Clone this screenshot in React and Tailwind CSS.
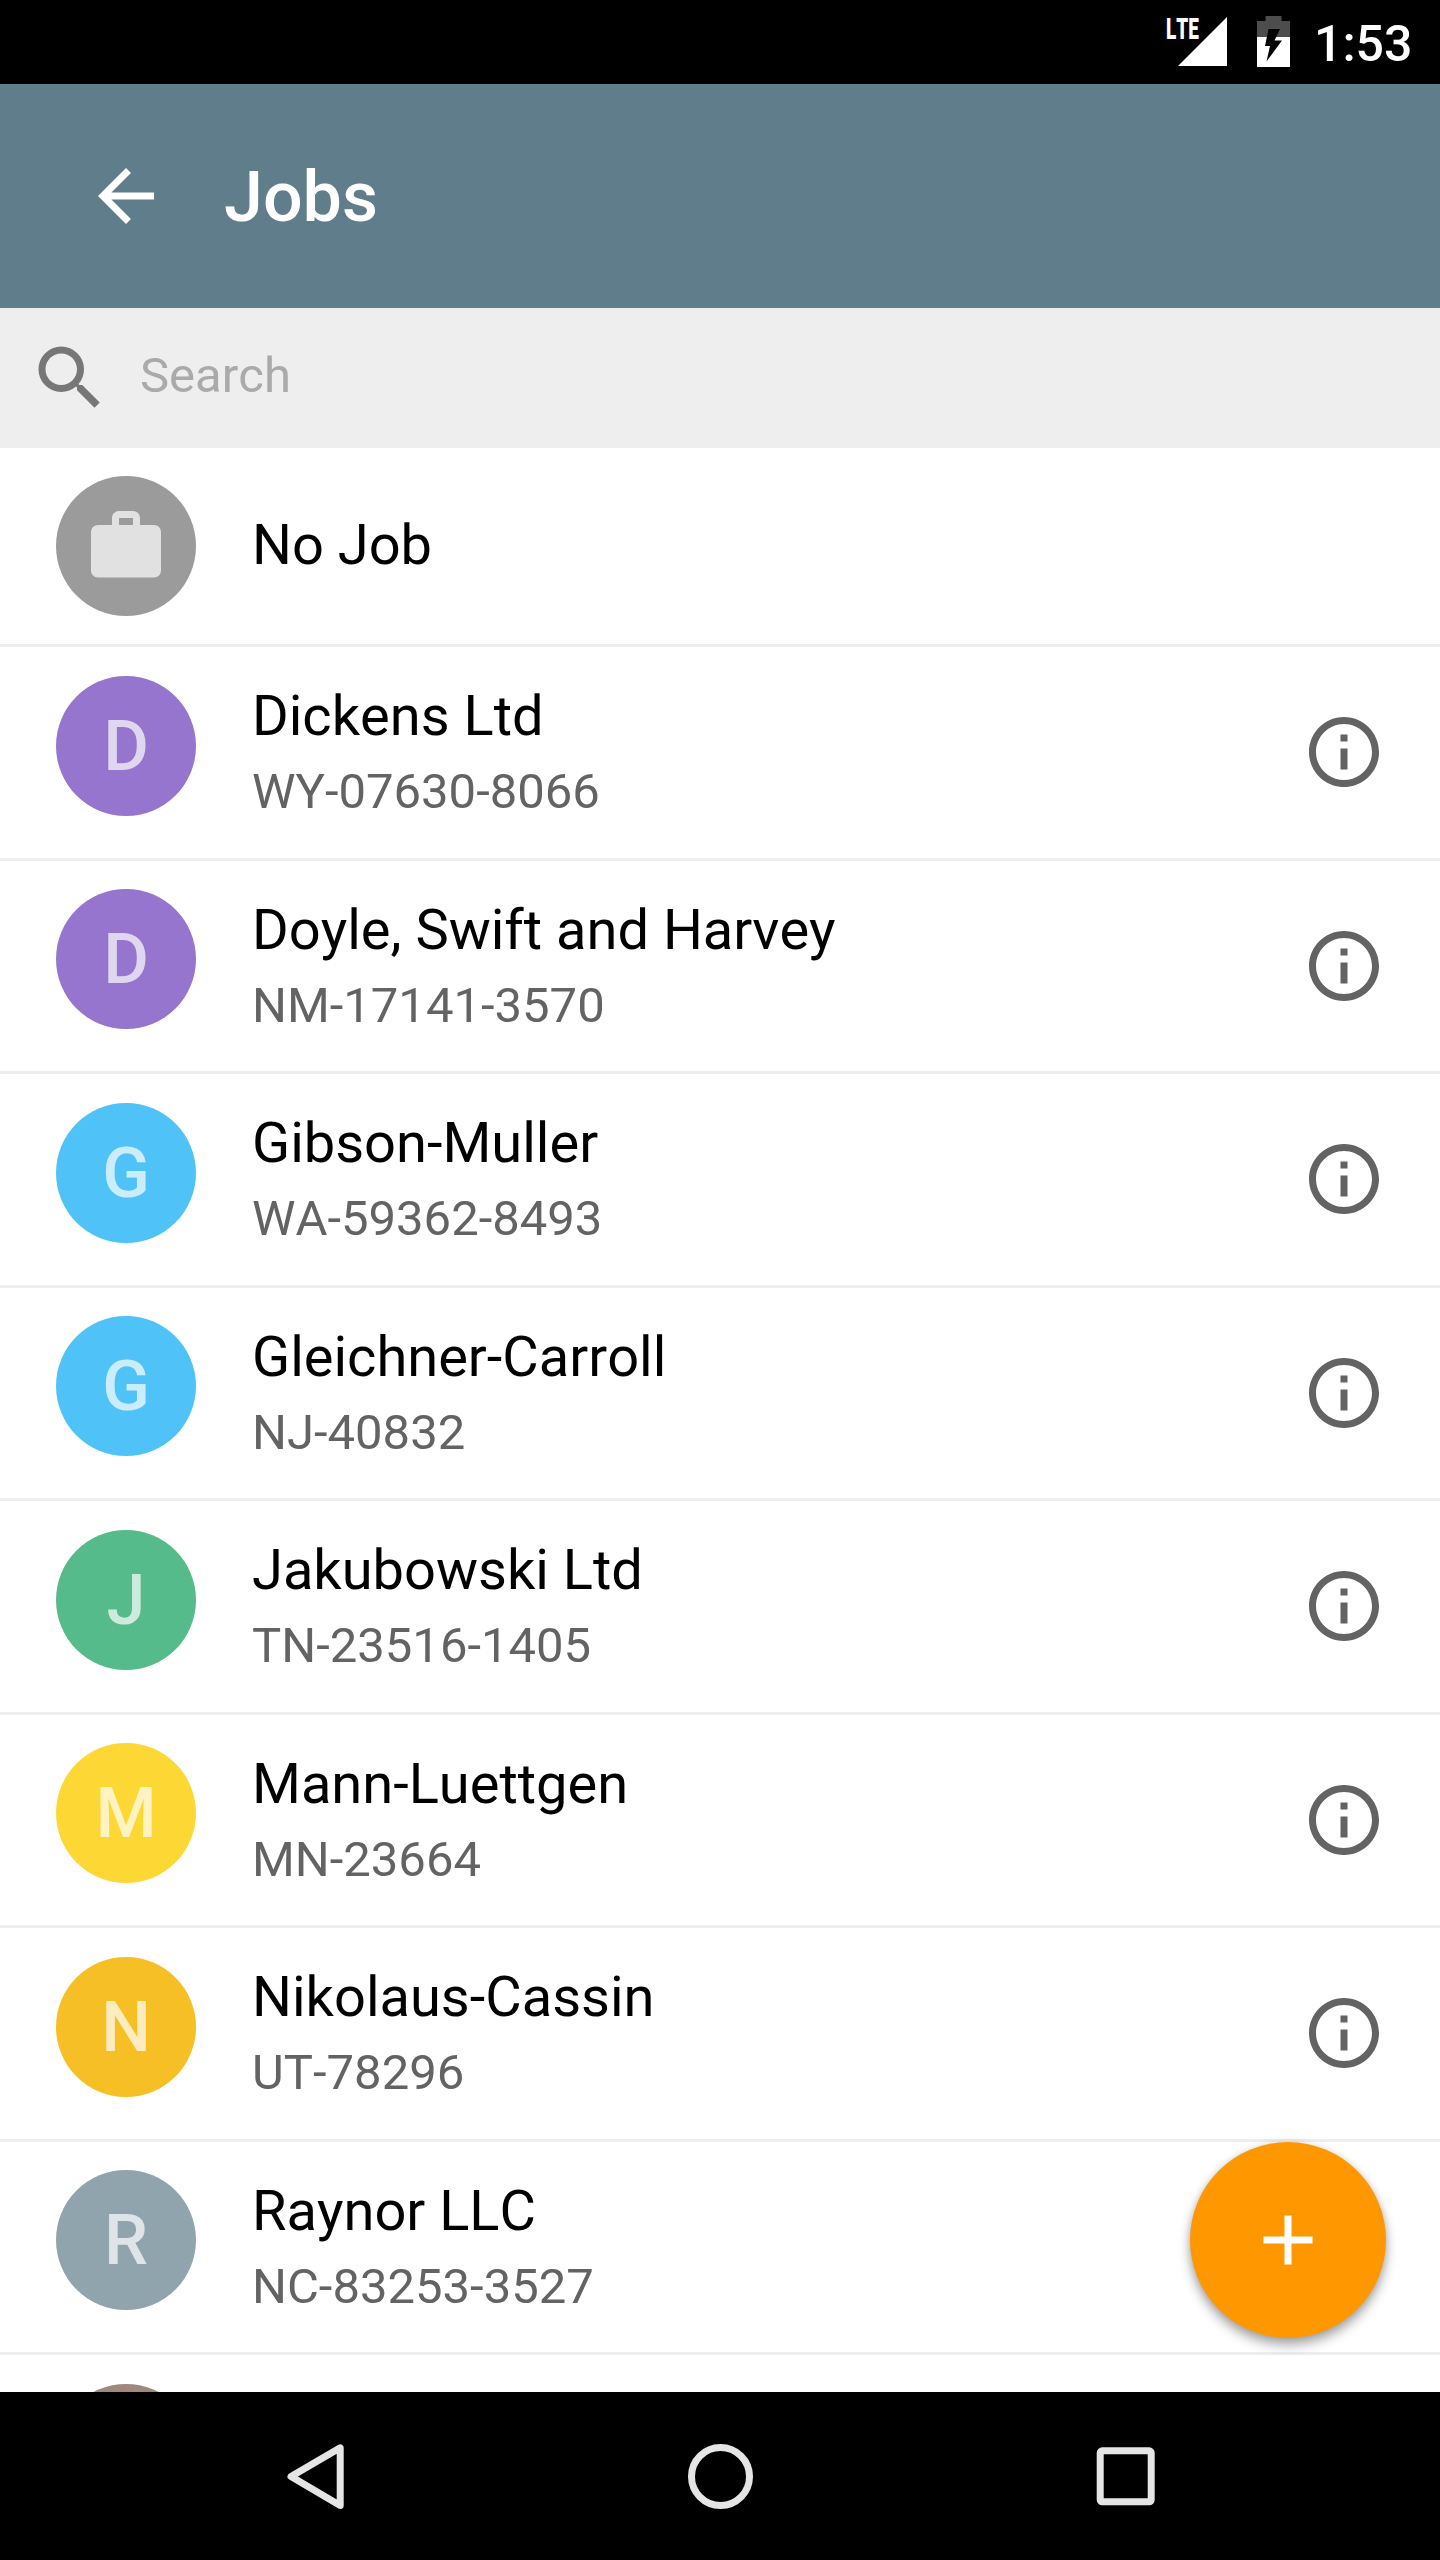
import { MdAdd, MdArrowBack, MdInfoOutline, MdSearch, MdWork } from "react-icons/md";

const jobs = [
  { name: "Dickens Ltd", code: "WY-07630-8066", color: "bg-[#9575cd]" },
  { name: "Doyle, Swift and Harvey", code: "NM-17141-3570", color: "bg-[#9575cd]" },
  { name: "Gibson-Muller", code: "WA-59362-8493", color: "bg-[#4fc3f7]" },
  { name: "Gleichner-Carroll", code: "NJ-40832", color: "bg-[#4fc3f7]" },
  { name: "Jakubowski Ltd", code: "TN-23516-1405", color: "bg-[#55bb8a]" },
  { name: "Mann-Luettgen", code: "MN-23664", color: "bg-[#fdd835]" },
  { name: "Nikolaus-Cassin", code: "UT-78296", color: "bg-[#f6bf26]" },
  { name: "Raynor LLC", code: "NC-83253-3527", color: "bg-[#90a4ae]" },
];

const StatusBar = () => {
  return (
    <div className="flex h-[84px] shrink-0 items-start bg-black pl-[1166px] text-white">
      <div className="mt-[15px] w-[12px] overflow-visible">
        <span className="block origin-left scale-x-[0.63] text-[30px] leading-[28px] font-black">LTE</span>
      </div>
      <svg className="mt-[17px] h-[49px] w-[49px] shrink-0" viewBox="0 0 49 49">
        <path d="M49 0v49H0z" fill="#fff" />
      </svg>
      <svg className="mt-[16px] ml-[30px] h-[51px] w-[33px] shrink-0" viewBox="0 0 33 51">
        <path d="M8.5 0h16v5H33v16H0V5h8.5z" fill="#4d4d4d" />
        <path d="M0 21h33v30H0z" fill="#fff" />
        <path d="M11.5 13H23l-5.500 11.500h7.500L9.500 45.500l3.500-15.500H8z" fill="#000" />
      </svg>
      <span className="ml-[24px] pt-[16px] text-[50px] leading-[57px] font-medium">1:53</span>
    </div>
  );
};

const Avatar = ({ color, children }) => {
  return (
    <div
      className={`flex h-[140px] w-[140px] shrink-0 items-center justify-center rounded-full text-[70px] leading-none font-medium text-white/70 ${color}`}
    >
      {children}
    </div>
  );
};

const Divider = () => <div className="mb-[0.5px] h-[3px] bg-[#eeeeee]" />;

const JobRow = ({ job }) => {
  return (
    <li>
      <div className="flex h-[210px] items-start pt-7 pr-[54px] pl-14">
        <Avatar color={job.color}>{job.name[0]}</Avatar>
        <div className="ml-14 flex-1 pt-[7.5px]">
          <p className="text-[56px] leading-[66px] text-black">{job.name}</p>
          <p className="mt-[14px] text-[49px] leading-[58px] text-[#636363]">{job.code}</p>
        </div>
        <MdInfoOutline className="mt-[34.5px] size-[84px] text-[#636363]" />
      </div>
      <Divider />
    </li>
  );
};

const NavBar = () => {
  return (
    <div className="flex h-[168px] shrink-0 items-center justify-between bg-black px-[274px]">
      <svg className="size-[84px]" viewBox="0 0 84 84" fill="none" stroke="#e5e5e5" strokeWidth="7" strokeLinejoin="round">
        <path d="M66.200 13.800v57.600L17 42.600z" />
      </svg>
      <svg className="size-[84px]" viewBox="0 0 84 84" fill="none" stroke="#e5e5e5" strokeWidth="7">
        <circle cx="42.500" cy="42.500" r="29" />
      </svg>
      <svg className="size-[84px]" viewBox="0 0 84 84" fill="none" stroke="#e5e5e5" strokeWidth="7">
        <rect x="18.200" y="16.800" width="51" height="51" rx="2" />
      </svg>
    </div>
  );
};

const App = () => {
  return (
    <div className="flex h-[2560px] w-[1440px] flex-col overflow-hidden bg-white font-['Roboto',sans-serif] [font-kerning:none]">
      <StatusBar />

      <header className="flex h-[224px] shrink-0 items-center bg-[#607d8b] pl-[84px] text-white">
        <MdArrowBack className="size-[84px]" />
        <h1 className="ml-14 pt-0.5 text-[70px] leading-[82px] font-medium">Jobs</h1>
      </header>

      <div className="flex h-[140px] shrink-0 items-center bg-[#eeeeee] pl-7">
        <MdSearch className="size-[84px] text-[#777777]" />
        <span className="ml-7 pb-[5px] text-[49px] leading-[58px] text-[#aaaaaa]">Search</span>
      </div>

      <main className="relative min-h-0 flex-1 overflow-hidden">
        <ul>
          <li>
            <div className="flex h-[196px] items-center pl-14">
              <Avatar color="bg-[#9b9b9b]">
                <MdWork className="size-[84px] text-[#e1e1e1]" />
              </Avatar>
              <p className="ml-14 pb-0.5 text-[56px] leading-[66px] text-black">No Job</p>
            </div>
            <Divider />
          </li>
          {jobs.map((job) => (
            <JobRow key={job.name} job={job} />
          ))}
          <li className="pt-7 pl-14">
            <Avatar color="bg-[#a1887f]" />
          </li>
        </ul>

        <button className="absolute right-[54px] bottom-[54px] flex size-[196px] items-center justify-center rounded-full bg-[#ff9800] text-white shadow-[0_7px_12px_rgba(0,0,0,0.34),0_0_7px_rgba(0,0,0,0.1)]">
          <MdAdd className="size-[84px]" />
        </button>
      </main>

      <NavBar />
    </div>
  );
};

export default App;
